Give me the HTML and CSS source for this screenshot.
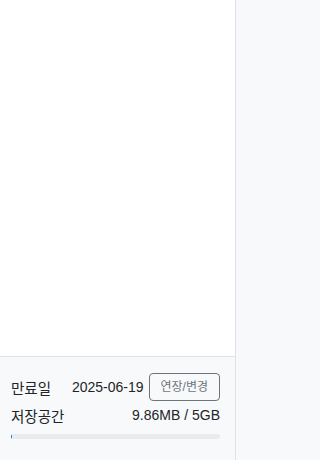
FILE: index.html
```html
<!DOCTYPE html>
<html lang="ko">
<head>
<meta charset="utf-8">
<link rel="stylesheet" href="styles.css">
</head>
<body>
<div class="layout">
  <aside class="sidebar">
    <div class="sidebar-body"></div>
    <div class="sidebar-footer">
      <div class="row">
        <span class="label">만료일</span>
        <span class="value-group">
          <span class="date">2025-06-19</span>
          <button class="btn">연장/변경</button>
        </span>
      </div>
      <div class="row storage">
        <span class="label">저장공간</span>
        <span class="value">9.86MB / 5GB</span>
      </div>
      <div class="progress"><div class="progress-bar" style="width:0.5%"></div></div>
    </div>
  </aside>
  <main class="content"></main>
</div>
</body>
</html>
```

FILE: styles.css
```css
html, body {
  margin: 0;
  padding: 0;
  height: 100%;
}
body {
  font-family: "Liberation Sans", "Noto Sans CJK KR", sans-serif;
  color: #212529;
  background: #f8f9fa;
}
.layout {
  display: flex;
  height: 460px;
}
.sidebar {
  width: 235px;
  flex: none;
  border-right: 1px solid #dee2e6;
  display: flex;
  flex-direction: column;
  background: #fff;
}
.sidebar-body {
  flex: 1;
}
.sidebar-footer {
  border-top: 1px solid #dee2e6;
  background: #f8f9fa;
  height: 104px;
  box-sizing: border-box;
  padding: 16px 15px 0 11px;
}
.row {
  display: flex;
  justify-content: space-between;
  align-items: center;
  font-size: 14px;
  height: 28px;
}
.label {
  font-size: 14.5px;
}
.value-group {
  display: flex;
  align-items: center;
  gap: 5px;
}
.btn {
  font-family: "Liberation Sans", "Noto Sans CJK KR", sans-serif;
  font-size: 12px;
  line-height: 18px;
  color: #6c757d;
  background: transparent;
  border: 1px solid #6c757d;
  border-radius: 4px;
  padding: 4px 11px;
  margin: 0;
}
.storage {
  height: 28px;
}
.progress {
  margin-top: 5px;
  height: 5px;
  background: #e9ecef;
  border-radius: 3px;
  overflow: hidden;
}
.progress-bar {
  height: 100%;
  background: #0d6efd;
  min-width: 1px;
}
.content {
  flex: 1;
  background: #f8f9fa;
}
```
